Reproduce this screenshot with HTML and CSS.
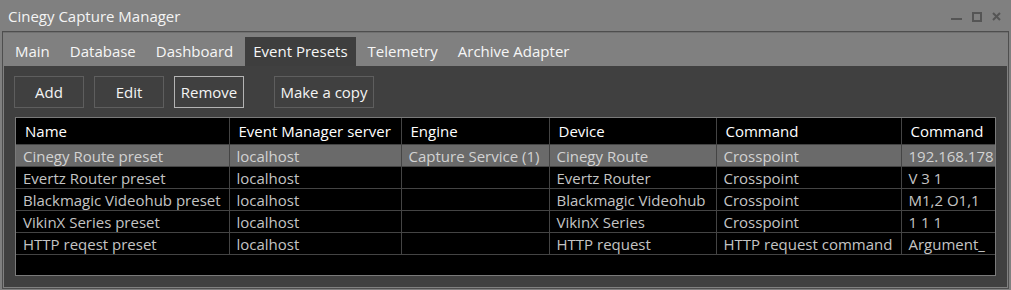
FILE: index.html
```html
<!DOCTYPE html>
<html lang="en">
<head>
  <meta charset="UTF-8" />
  <title>Cinegy Capture Manager</title>
  <link rel="stylesheet" href="styles.css">
</head>
<body>
  <div class="titlebar">
    <span class="title">Cinegy Capture Manager</span>
    <div class="win-buttons">
      <svg width="11" height="10" viewBox="0 0 11 10"><rect x="0" y="6" width="11" height="2" fill="#555"/></svg>
      <svg width="10" height="10" viewBox="0 0 10 10"><rect x="1" y="1" width="8" height="8" fill="none" stroke="#555" stroke-width="2"/></svg>
      <svg width="9" height="9" viewBox="0 0 9 9"><path d="M1 1 L8 8 M8 1 L1 8" stroke="#555" stroke-width="2"/></svg>
    </div>
  </div>

  <div class="frame">
    <div class="tabs">
      <div class="tab">Main</div>
      <div class="tab">Database</div>
      <div class="tab">Dashboard</div>
      <div class="tab active">Event Presets</div>
      <div class="tab">Telemetry</div>
      <div class="tab">Archive Adapter</div>
    </div>

    <div class="pane">
      <div class="toolbar">
        <button class="btn">Add</button>
        <button class="btn">Edit</button>
        <button class="btn focused">Remove</button>
        <button class="btn wide">Make a copy</button>
      </div>

      <div class="grid-box">
        <table class="grid">
          <colgroup>
            <col style="width:213px">
            <col style="width:172px">
            <col style="width:148px">
            <col style="width:167px">
            <col style="width:185px">
            <col>
          </colgroup>
          <thead>
            <tr>
              <th>Name</th>
              <th>Event Manager server</th>
              <th>Engine</th>
              <th>Device</th>
              <th>Command</th>
              <th>Command</th>
            </tr>
          </thead>
          <tbody>
            <tr class="selected">
              <td>Cinegy Route preset</td>
              <td>localhost</td>
              <td>Capture Service (1)</td>
              <td>Cinegy Route</td>
              <td>Crosspoint</td>
              <td>192.168.178</td>
            </tr>
            <tr>
              <td>Evertz Router preset</td>
              <td>localhost</td>
              <td></td>
              <td>Evertz Router</td>
              <td>Crosspoint</td>
              <td>V 3 1</td>
            </tr>
            <tr>
              <td>Blackmagic Videohub preset</td>
              <td>localhost</td>
              <td></td>
              <td>Blackmagic Videohub</td>
              <td>Crosspoint</td>
              <td>M1,2 O1,1</td>
            </tr>
            <tr>
              <td>VikinX Series preset</td>
              <td>localhost</td>
              <td></td>
              <td>VikinX Series</td>
              <td>Crosspoint</td>
              <td>1 1 1</td>
            </tr>
            <tr>
              <td>HTTP reqest preset</td>
              <td>localhost</td>
              <td></td>
              <td>HTTP request</td>
              <td>HTTP request command</td>
              <td>Argument_</td>
            </tr>
          </tbody>
        </table>
      </div>
    </div>
  </div>
</body>
</html>
```

FILE: styles.css
```css
html, body {
  margin: 0;
  padding: 0;
  height: 290px;
  overflow: hidden;
  background: #808080;
  font-family: "Open Sans", "Noto Sans", sans-serif;
  font-size: 14px;
  color: #fff;
}

.titlebar {
  height: 31px;
  display: flex;
  align-items: center;
  justify-content: space-between;
  padding: 0 10px 0 8px;
}

.title {
  font-size: 15px;
  color: #f4f4f4;
}

.win-buttons {
  display: flex;
  align-items: center;
  gap: 10px;
  margin-top: 2px;
}

.frame {
  margin: 0 2px;
  height: 256px;
  border: 1px solid #4e4e4e;
  display: flex;
  flex-direction: column;
}

.tabs {
  display: flex;
  align-items: flex-end;
  gap: 4px;
  height: 33px;
  padding: 0 0 0 4px;
  background: #808080;
  border-top: 1px solid #707070;
}

.tab {
  height: 29px;
  line-height: 29px;
  padding: 0 8px;
  color: #f6f6f6;
  font-size: 15px;
}

.tab.active {
  background: #3e3e3e;
}

.pane {
  flex: 1;
  margin: 0 1px 1px 1px;
  background: #404040;
  padding: 10px 10px 0 10px;
}

.toolbar {
  display: flex;
  gap: 10px;
}

.btn {
  width: 70px;
  height: 32px;
  background: #404040;
  border: 1px solid #5e5e5e;
  color: #f4f4f4;
  font-family: inherit;
  font-size: 15px;
  padding: 0;
}

.btn.focused {
  border-color: #b4b4b4;
}

.btn.wide {
  width: 100px;
  margin-left: 20px;
}

.grid-box {
  margin: 9px 1px 0 1px;
  height: 157px;
  border: 1px solid #7a7a7a;
  background: #000;
  overflow: hidden;
}

.grid {
  width: 100%;
  table-layout: fixed;
  border-collapse: collapse;
}

.grid th {
  height: 26px;
  padding: 0 8px 0 9px;
  text-align: left;
  font-weight: normal;
  font-size: 15px;
  color: #fff;
  border-right: 1px solid #444;
  border-bottom: 1px solid #444;
  white-space: nowrap;
  overflow: hidden;
}

.grid td {
  height: 21px;
  padding: 0 7px;
  font-size: 15px;
  color: #c4c4c4;
  border-right: 1px solid #444;
  border-bottom: 1px solid #444;
  white-space: nowrap;
  overflow: hidden;
  line-height: 20px;
}

.grid th:last-child,
.grid td:last-child {
  border-right: none;
  padding-right: 0;
}

.grid tr.selected td {
  background: #6a6a6a;
  color: #d2d2d2;
}
```
